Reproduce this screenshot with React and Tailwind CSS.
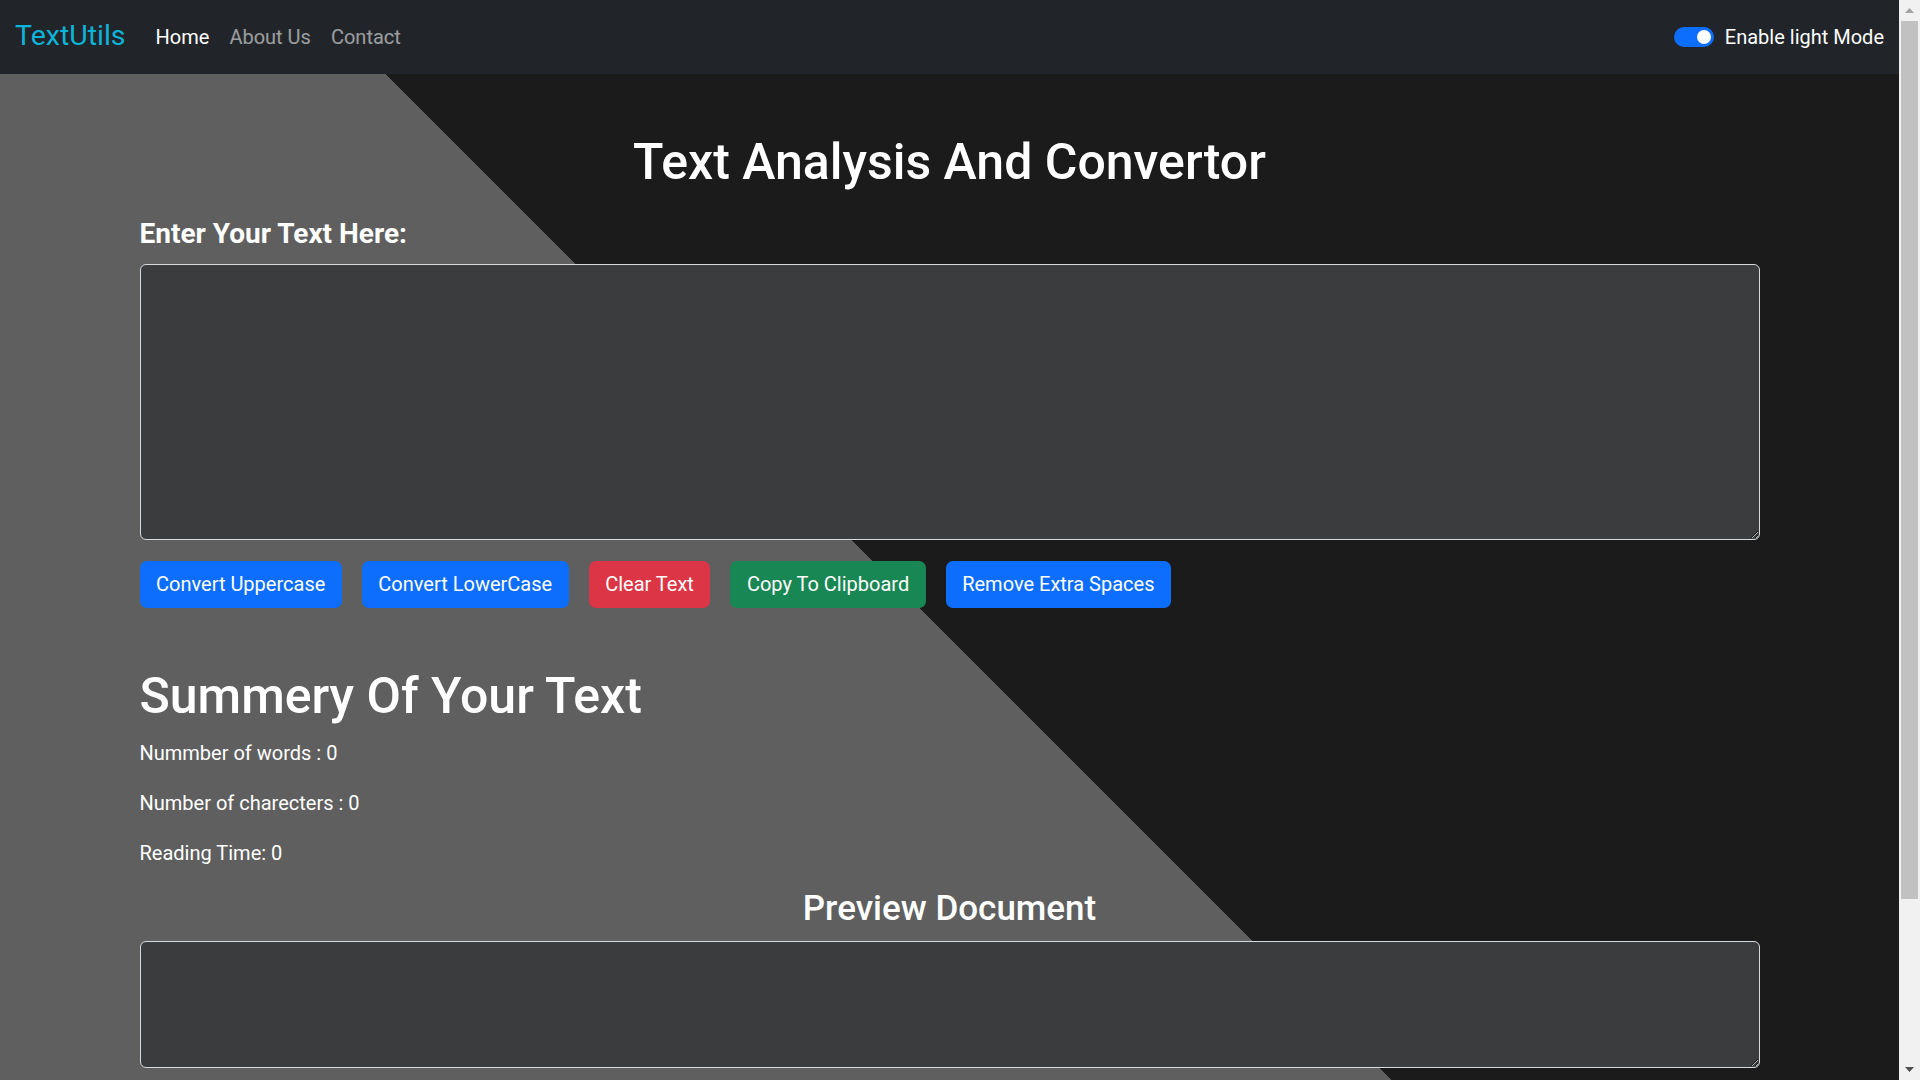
const buttons = [
  { label: "Convert Uppercase", color: "bg-[#0d6efd]" },
  { label: "Convert LowerCase", color: "bg-[#0d6efd]" },
  { label: "Clear Text", color: "bg-[#dc3545]" },
  { label: "Copy To Clipboard", color: "bg-[#198754]" },
  { label: "Remove Extra Spaces", color: "bg-[#0d6efd]" },
]

function Navbar() {
  return (
    <nav className="h-[74px] bg-[#212529] flex items-center justify-between px-[15px]">
      <div className="flex items-center">
        <a className="text-[28.5px] leading-[34px] text-[#0db4d9] mr-[20px] mb-[3px]">TextUtils</a>
        <ul className="flex items-center text-[20px] leading-[30px]">
          <li><a className="px-[10px] text-white">Home</a></li>
          <li><a className="px-[10px] text-white/55">About Us</a></li>
          <li><a className="px-[10px] text-white/55">Contact</a></li>
        </ul>
      </div>
      <div className="flex items-center">
        <span className="w-[40px] h-[20px] rounded-full bg-[#0d6efd] flex items-center justify-end pr-[3px]">
          <span className="w-[14px] h-[14px] rounded-full bg-white" />
        </span>
        <label className="ml-[11px] text-[20px] leading-[30px] text-white">Enable light Mode</label>
      </div>
    </nav>
  )
}

// window scrollbar as seen in the screenshot
function Scrollbar() {
  return (
    <div className="w-[21px] h-full shrink-0 bg-[#f1f1f1] flex flex-col items-center">
      <div className="h-[21px] flex items-center justify-center">
        <svg width="9" height="5" viewBox="0 0 9 5"><path d="M4.5 0L9 5H0z" fill="#a3a3a3" /></svg>
      </div>
      <div className="w-[17px] h-[878px] bg-[#c1c1c1]" />
      <div className="flex-1" />
      <div className="h-[21px] flex items-center justify-center">
        <svg width="9" height="5" viewBox="0 0 9 5"><path d="M0 0H9L4.5 5z" fill="#505050" /></svg>
      </div>
    </div>
  )
}

export default function App() {
  return (
    <div className="flex h-screen overflow-hidden font-['Roboto',sans-serif]">
      <div className="flex-1 overflow-hidden">
        <div className="min-h-full text-white bg-[#5f5f5f] bg-[linear-gradient(45deg,#5f5f5f_55.2%,#1b1b1b_55.2%)] bg-no-repeat bg-[length:3000px_3000px]">
          <Navbar />

          <div className="mx-auto max-w-[1650px] px-[15px] pt-[58px] pb-[209px]">
            <h1 className="text-center text-[50px] font-medium leading-[60px]">Text Analysis And Convertor</h1>

            <h4 className="mt-[24.5px] text-[28px] font-bold leading-[33.6px]">Enter Your Text Here:</h4>
            <textarea
              className="mt-[14px] block w-full h-[275.5px] rounded-[6px] border border-[#d6d9dd] bg-[#3b3c3e] text-white text-[20px] px-[15px] py-[7px] outline-none"
              defaultValue=""
            />

            <div className="mt-[21px] flex gap-[20px]">
              {buttons.map((b) => (
                <button
                  key={b.label}
                  className={`${b.color} h-[47.5px] px-[16.5px] rounded-[7px] text-[20px] leading-[30px] text-white`}
                >
                  {b.label}
                </button>
              ))}
            </div>

            <h1 className="mt-[57.5px] text-[50px] font-medium leading-[60px]">Summery Of Your Text</h1>
            <div className="mt-[12px] text-[20px] leading-[30px] flex flex-col gap-[20px]">
              <p>Nummber of words : 0</p>
              <p>Number of charecters : 0</p>
              <p>Reading Time: 0</p>
            </div>

            <h3 className="mt-[20px] text-center text-[35px] font-medium leading-[42px]">Preview Document</h3>
            <textarea
              className="mt-[11px] block w-full h-[127px] rounded-[6px] border border-[#d6d9dd] bg-[#3b3c3e] text-white text-[20px] px-[15px] py-[7px] outline-none"
              defaultValue=""
            />
          </div>
        </div>
      </div>
      <Scrollbar />
    </div>
  )
}
